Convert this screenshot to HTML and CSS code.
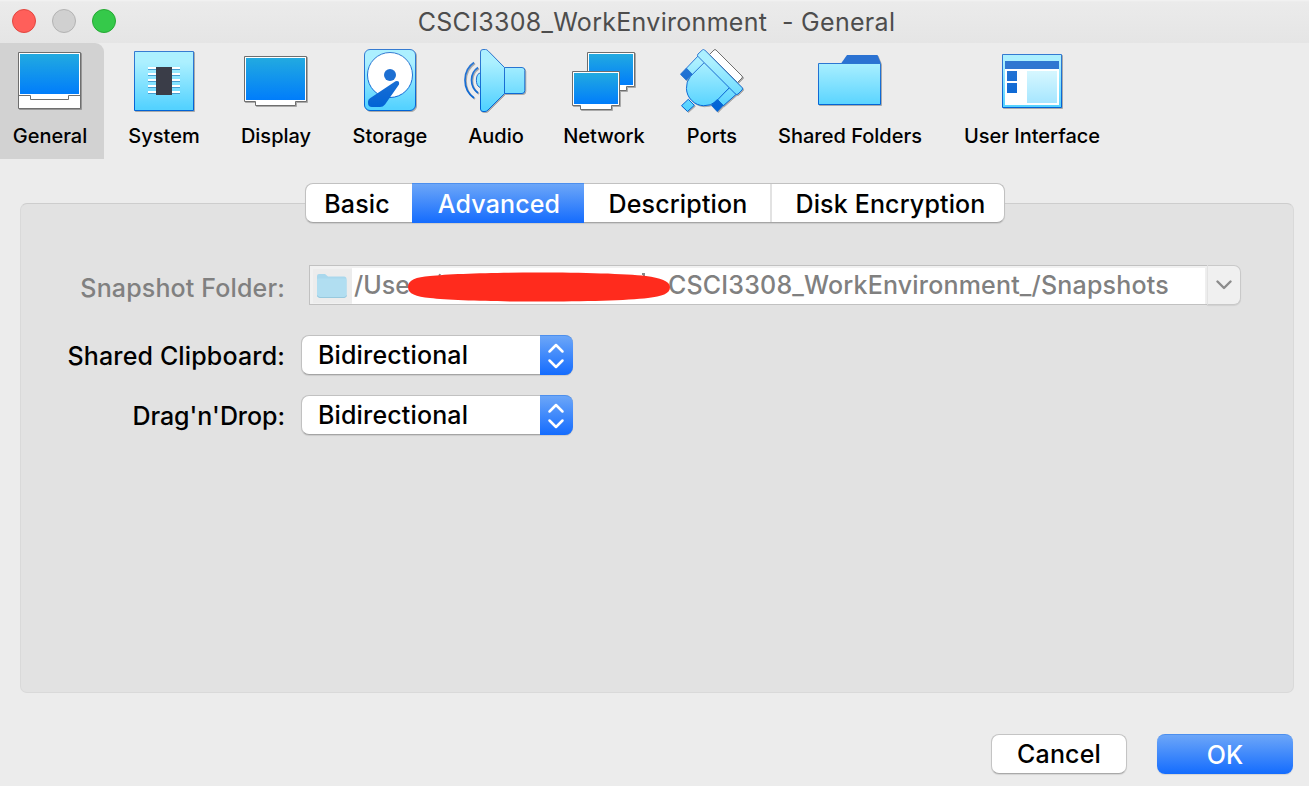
FILE: index.html
```html
<!DOCTYPE html>
<html lang="en">
<head>
<meta charset="utf-8">
<title>CSCI3308_WorkEnvironment - General</title>
<link rel="stylesheet" href="styles.css">
</head>
<body>
<svg class="defs" width="0" height="0" aria-hidden="true">
  <defs>
    <linearGradient id="screen" x1="0" y1="0" x2="0" y2="1"><stop offset="0" stop-color="#22aae0"/><stop offset="1" stop-color="#007dfb"/></linearGradient>
    <linearGradient id="cyan" gradientUnits="userSpaceOnUse" x1="0" y1="14" x2="0" y2="60"><stop offset="0" stop-color="#acf0ff"/><stop offset="1" stop-color="#54d2ff"/></linearGradient>
    <linearGradient id="blue" gradientUnits="userSpaceOnUse" x1="0" y1="4" x2="0" y2="60"><stop offset="0" stop-color="#367bd1"/><stop offset="1" stop-color="#0063d6"/></linearGradient>
    <linearGradient id="pale" x1="0" y1="0" x2="0" y2="1"><stop offset="0" stop-color="#d6f7ff"/><stop offset="1" stop-color="#a6e6ff"/></linearGradient>
  </defs>
</svg>
<div class="window">
  <header class="titlebar">
    <div class="lights"><i class="light close"></i><i class="light minimize"></i><i class="light maximize"></i></div>
    <h1 class="title">CSCI3308_WorkEnvironment&nbsp; - General</h1>
  </header>

  <nav class="toolbar">
    <a class="tool general selected">
      <svg class="icon" viewBox="0 0 66 66"><path d="M.5 4.500h62v56H.5z" fill="#fff" stroke="#6e6e6e"/><path d="M2 6h59v40H2z" fill="url(#screen)"/><path d="M1 47.500h11.500v4h38v-4H62" fill="none" stroke="#6e6e6e"/></svg>
      <span class="label">General</span>
    </a>
    <a class="tool system">
      <svg class="icon" viewBox="0 0 66 66"><path d="M2.500 3.500h59v59h-59z" fill="url(#cyan)" stroke="url(#blue)"/><path d="M16 21.500h32m-32 6h32m-32 6h32m-32 6h32m-32 6h32" stroke="#479fd2"/><path d="M16 20h32m-32 6h32m-32 6h32m-32 6h32m-32 6h32" stroke="#fff" stroke-width="2"/><path d="M24 19h16v28H24z" fill="#3a3d48"/></svg>
      <span class="label">System</span>
    </a>
    <a class="tool display">
      <svg class="icon" viewBox="0 0 66 66"><path d="M.5 8.500h62v45H51.500v4H11.500v-4H.5z" fill="#fff" stroke="#6e6e6e"/><path d="M2 10h59v42H2z" fill="url(#screen)"/></svg>
      <span class="label">Display</span>
    </a>
    <a class="tool storage">
      <svg class="icon" viewBox="0 0 66 66"><rect x="6.500" y="1.500" width="51" height="61" rx="5.500" fill="url(#cyan)" stroke="url(#blue)"/><circle cx="32" cy="27" r="22.500" fill="#fff" stroke="url(#blue)"/><circle cx="32" cy="27" r="6" fill="#1d6fd2"/><path d="M37.500 33.200Q41.800 32.200 41 36.500L27 56.500Q25 59 22 59H14Q10 59 10 55V53.500Q10 51.500 12 50.200Z" fill="url(#blue)"/></svg>
      <span class="label">Storage</span>
    </a>
    <a class="tool audio">
      <svg class="icon" viewBox="0 0 66 66"><g stroke="url(#blue)"><path d="M16.500 25.200C11 24.500 11 39.500 16.500 39.200" fill="url(#cyan)"/><path d="M19 1.500H21.500Q23 1.500 24 2.800L40.500 19.500H58Q60.800 19.500 60.800 22.500V42.500Q60.800 45.500 58 45.500H40.500L24 62Q22.500 63.500 21 63.500H19Q16.500 63.500 16.500 61V4Q16.500 1.500 19 1.500Z" fill="url(#cyan)"/><path d="M40.500 19.500L40.510 45.500"/><path d="M10 14.500Q1 20.500 1 32T10 50M14 19.500Q7.500 24 7.500 32T14 45" fill="none" stroke-width="1.700"/></g></svg>
      <span class="label">Audio</span>
    </a>
    <a class="tool network">
      <svg class="icon" viewBox="0 0 66 66"><path d="M15.500 4.500h47v34h-8v4h-31v-4h-8z" fill="#fff" stroke="#6e6e6e"/><path d="M17 6h44v31H17z" fill="url(#screen)"/><path d="M.5 23.500h47v34h-8v4h-31v-4H.5z" fill="#fff" stroke="#6e6e6e"/><path d="M2 25h44v31H2z" fill="url(#screen)"/></svg>
      <span class="label">Network</span>
    </a>
    <a class="tool ports">
      <svg class="icon" viewBox="0 0 66 66"><path d="M29.500 6.500 34 2Q35 1 36 2L62 28Q63 29 62 30L57.500 34.500Z" fill="#fff" stroke="#6e6e6e"/><g fill="url(#cyan)" stroke="url(#blue)"><path d="M8.300 51.300 14.300 57.300 7.500 63.500 1.500 57.700Z"/><path d="M18 8 25 14.500 12.300 27 6.300 20.300Z"/><path d="M50 39.300 56.500 46 43.300 57.800 37.300 51.300Z"/><path d="M24.300 14.500 10.500 28.300A18 18 0 0 0 36 53.500L49.700 39.300Z"/><path d="M18 8.500Q16.800 7.200 18 6L22.300 2Q23.500 1 24.700 2L62 39.500Q63.200 41 62 42L58 46Q56.800 47.200 55.500 46Z"/></g><path d="M6.300 20 12.300 26.300 6.300 32.300.3 26.300ZM37.300 51.300l6 6-6 6.400-6-6.400Z" fill="url(#blue)" stroke="url(#blue)" stroke-width=".6"/></svg>
      <span class="label">Ports</span>
    </a>
    <a class="tool folders">
      <svg class="icon" viewBox="0 0 66 66"><path d="M23 15.500 29 7H59.500L63 15.500Z" fill="#2b72d2"/><path d="M.5 15.500h62v41H.5z" fill="url(#cyan)" stroke="url(#blue)"/></svg>
      <span class="label">Shared Folders</span>
    </a>
    <a class="tool interface">
      <svg class="icon" viewBox="0 0 66 66"><path d="M2.500 6.500h59v53h-59z" fill="url(#cyan)" stroke="url(#blue)"/><path d="M5 13h54v44H5z" fill="#fff"/><path d="M5 13h54v8H5z" fill="#2f77d1"/><path d="M7 23h10v10H7zM7 35h10v10H7z" fill="url(#blue)"/><path d="M27 23h30v32H27z" fill="url(#pale)"/></svg>
      <span class="label">User Interface</span>
    </a>
  </nav>

  <main class="content">
    <div class="tabs">
      <button class="tab basic"><span>Basic</span></button>
      <button class="tab advanced"><span>Advanced</span></button>
      <button class="tab description"><span>Description</span></button>
      <button class="tab encryption"><span>Disk Encryption</span></button>
    </div>
    <section class="panel">
      <div class="row snapshot">
        <span class="name">Snapshot Folder:</span>
        <div class="combo">
          <div class="field">
            <span class="thumb"><svg width="32" height="26" viewBox="0 0 32 26"><path d="M1 22V3Q1 1 3 1H9L12 3.500H28Q30.500 3.500 30.500 6V22Q30.500 24.500 28 24.500H3.500Q1 24.500 1 22Z" fill="#a9d8ed"/><path d="M1 6.500Q1 5.500 2.500 5.500H29Q30.500 5.500 30.500 7V22Q30.500 24.500 28 24.500H3.500Q1 24.500 1 22Z" fill="#b1def1"/><path d="M1.500 22.500Q2 24.500 4 24.500H28Q30 24.500 30.500 22.500" fill="none" stroke="#98c9de"/></svg></span>
            <span class="path-start">/Use</span>
            <svg class="redaction" width="262" height="30" viewBox="0 0 262 30"><path d="M31 5 32 2M234 2h2v3" stroke="#888" stroke-width="2" fill="none"/><path d="M0 15C0 8 8 5 22 4C62-.7 198-.7 238 4C252 6 262 9 262 15C262 22 254 24 240 26C200 30.800 62 30.800 22 26C8 24.500 0 22 0 15Z" fill="#ff2b1d"/></svg>
            <span class="path-end">CSCI3308_WorkEnvironment_/Snapshots</span>
          </div>
          <div class="drop"><svg width="16" height="10" viewBox="0 0 16 10"><path d="M1.500 1.500 8 8l6.500-6.500" fill="none" stroke="#8c8c8c" stroke-width="2.400" stroke-linecap="round" stroke-linejoin="round"/></svg></div>
        </div>
      </div>
      <div class="row clipboard">
        <span class="name">Shared Clipboard:</span>
        <div class="select"><span class="value">Bidirectional</span><span class="stepper"><svg width="18" height="26" viewBox="0 0 18 26"><path d="M2.500 8.500 9 2l6.500 6.500M2.500 17.500 9 24l6.500-6.500" fill="none" stroke="#fff" stroke-width="2.500" stroke-linecap="round" stroke-linejoin="round"/></svg></span></div>
      </div>
      <div class="row dragdrop">
        <span class="name">Drag'n'Drop:</span>
        <div class="select"><span class="value">Bidirectional</span><span class="stepper"><svg width="18" height="26" viewBox="0 0 18 26"><path d="M2.500 8.500 9 2l6.500 6.500M2.500 17.500 9 24l6.500-6.500" fill="none" stroke="#fff" stroke-width="2.500" stroke-linecap="round" stroke-linejoin="round"/></svg></span></div>
      </div>
    </section>
  </main>
  <footer class="actions">
    <button class="button cancel">Cancel</button>
    <button class="button ok">OK</button>
  </footer>
</div>
</body>
</html>
```
FILE: styles.css
```css
* { box-sizing: border-box; }
body { margin: 0; background: #ececec; color: #000; font: 450 25px/30px Inter, "Liberation Sans", sans-serif; letter-spacing: .15px; overflow: hidden; }
button { font: inherit; letter-spacing: inherit; color: inherit; padding: 0; margin: 0; border: 0; background: none; }
svg { display: block; flex: none; }
.defs { position: absolute; }
.window { width: 1309px; height: 786px; display: flex; flex-direction: column; background: #ececec; }

.titlebar { height: 43px; flex: none; display: grid; grid-template-columns: 130px 1fr 130px; background: linear-gradient(#f3f3f3 0, #ebebeb 2px, #e5e5e5); }
.lights { display: flex; gap: 16px; padding: 9px 0 0 12px; }
.light { width: 24px; height: 24px; border-radius: 50%; border: 1px solid; }
.close { background: #ff5f5a; border-color: #e2463f; }
.minimize { background: #d0d0d0; border-color: #b3b3b3; }
.maximize { background: #35c94a; border-color: #25a933; }
.title { margin: 0; padding: 7px 0 0 4px; color: #4d4d4d; font-size: 25px; line-height: 30px; font-weight: 400; letter-spacing: .3px; text-align: center; white-space: nowrap; }

.toolbar { height: 116px; flex: none; display: flex; letter-spacing: 0; }
.tool { display: flex; flex-direction: column; align-items: center; padding-top: 5px; flex: none; }
.selected { background: #d2d2d2; border-radius: 0 9px 0 0; }
.icon { width: 66px; height: 66px; margin-right: -2px; filter: drop-shadow(1px 1px 0 rgba(0,0,0,.28)); }
.label { margin-top: 10px; font-size: 20px; line-height: 24px; font-weight: 500; white-space: nowrap; }
.general { width: 104px; padding-right: 4px; }
.system { width: 120px; }
.display { width: 104px; }
.storage { width: 124px; }
.audio, .ports { width: 88px; }
.network { width: 128px; }
.folders { width: 188px; }
.interface { width: 176px; }

.content { padding: 24px 15px 0 20px; }
.tabs { position: relative; z-index: 1; display: flex; width: 700px; height: 40px; margin: 0 0 -20px 285px; background: #fff; border: 1px solid #c1c1c1; border-bottom-color: #a5a5a5; border-radius: 8px; box-shadow: 0 1px 1px rgba(0,0,0,.1); }
.tab { display: flex; align-items: center; justify-content: center; padding-top: 1px; white-space: nowrap; }
.basic { width: 106px; padding-right: 4px; }
.advanced { width: 172px; margin: -1px 0; padding: 0 0 0 2px; color: #fff; background: linear-gradient(#6ca6f8, #146cfe); border-top: 1px solid #4c8fee; }
.description { width: 188px; padding-left: 2px; border-right: 2px solid #e2e2e2; }
.encryption { flex: 1; padding-left: 5px; }
.panel { height: 490px; padding-top: 61px; background: #e2e2e2; border: 1px solid #d9d9d9; border-top-color: #cdcdcd; border-radius: 7px; }
.row { display: flex; }
.name { width: 264px; text-align: right; white-space: nowrap; padding-top: 6px; line-height: 30px; }
.snapshot { height: 70px; color: #808080; }
.snapshot .name { padding-top: 8px; }
.dragdrop .name { letter-spacing: -.05px; }
.combo { display: flex; width: 932px; height: 40px; margin-left: 24px; }
.field { display: flex; width: 898px; border: 1px solid #c1c1c1; border-right: 0; background: #fff; box-shadow: inset 0 2px #f1f1f1, inset 3px 0 #f1f1f1, inset -2px 0 #efefef; white-space: nowrap; }
.thumb { width: 42px; background: #ececec; border: solid #f1f1f1; border-width: 3px 0 1px 3px; display: flex; padding: 4px 0 0 3px; }
.path-start { width: 56px; padding: 4px 0 0 2px; letter-spacing: 0; }
.redaction { position: relative; z-index: 1; margin-top: 6px; }
.path-end { padding-top: 4px; margin-left: -2px; letter-spacing: .18px; }
.drop { width: 34px; display: flex; align-items: center; justify-content: center; padding-right: 1px; background: #f0f0f0; border: 1px solid #c9c9c9; border-left-color: #e3e3e3; border-radius: 0 7px 7px 0; box-shadow: 0 1px 1px rgba(0,0,0,.08); }
.clipboard, .dragdrop { height: 60px; }
.select { width: 272px; height: 40px; margin-left: 16px; display: flex; justify-content: space-between; background: #fff; border: 1px solid #c1c1c1; border-bottom-color: #a5a5a5; border-radius: 8px; box-shadow: 0 1px 1px rgba(0,0,0,.1); }
.value { padding: 4px 0 0 16px; white-space: nowrap; }
.stepper { width: 33px; margin: -1px -1px -1px 0; padding-right: 1px; display: flex; align-items: center; justify-content: center; background: linear-gradient(#6ca6f8, #146cfe); border-top: 1px solid #4c8fee; border-radius: 0 8px 8px 0; }

.actions { display: flex; justify-content: flex-end; gap: 30px; padding: 41px 16px 0 0; }
.button { width: 136px; height: 40px; border-radius: 8px; white-space: nowrap; }
.cancel { background: #fff; border: 1px solid #c4c4c4; border-bottom-color: #a9a9a9; box-shadow: 0 1px 1px rgba(0,0,0,.1); }
.ok { color: #fff; background: linear-gradient(#6ca6f8, #146cfe); border-top: 1px solid #4c8fee; box-shadow: 0 1px 1px rgba(0,0,0,.1); }
```
